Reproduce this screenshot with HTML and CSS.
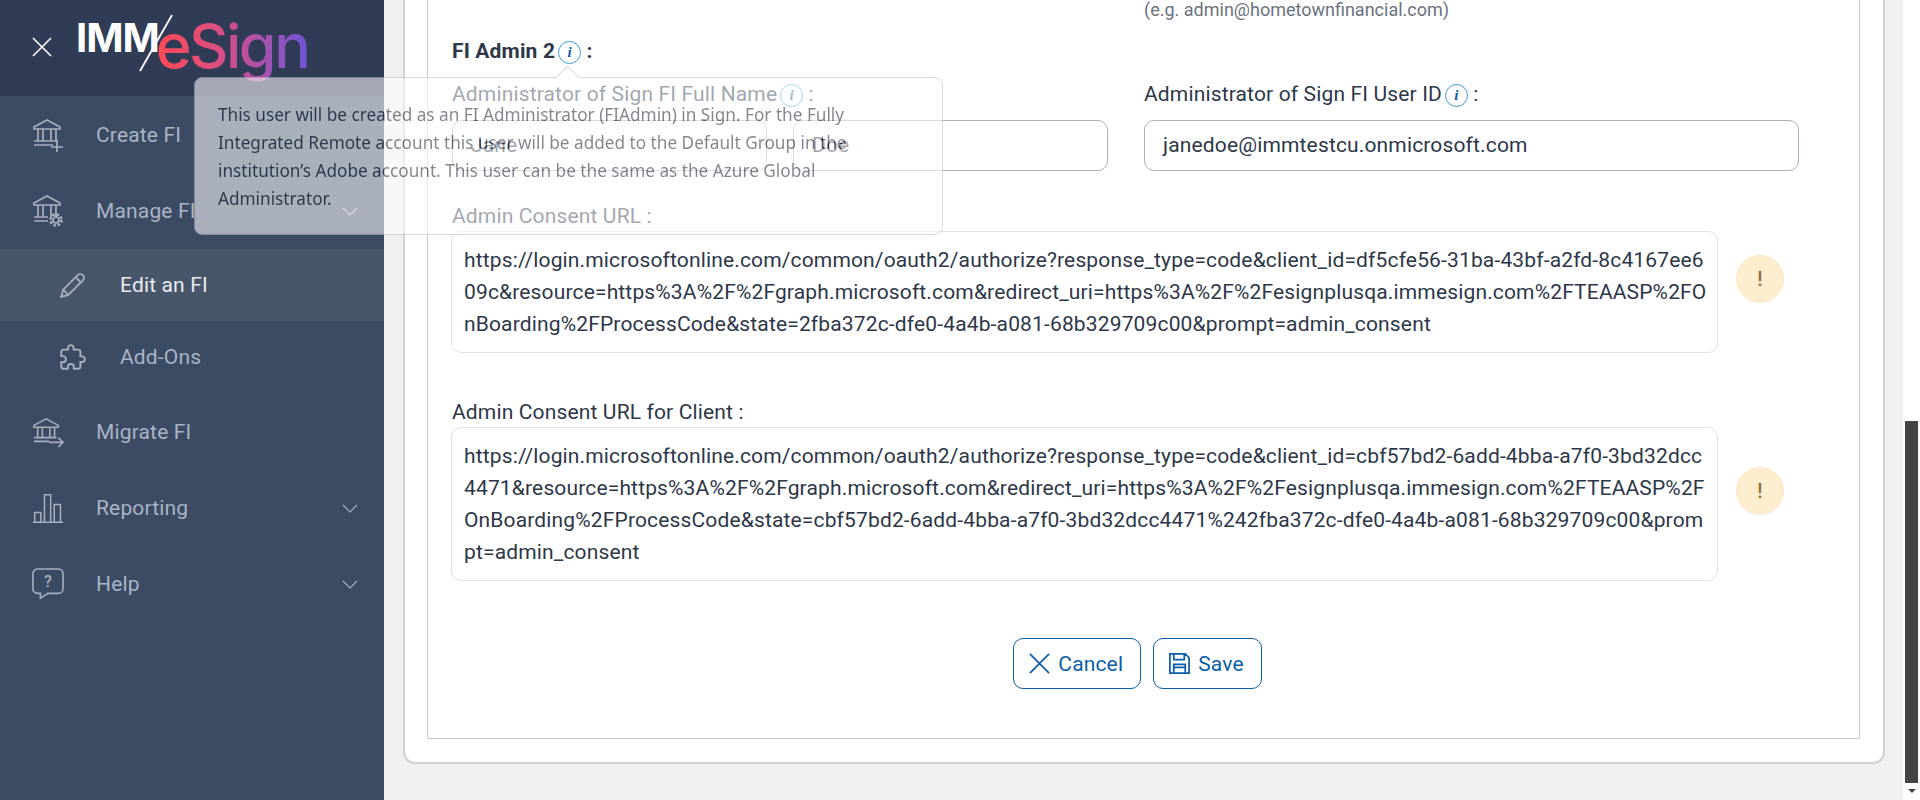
FILE: index.html
```html
<!DOCTYPE html>
<html lang="en">

<head>
  <meta charset="UTF-8" />
  <title>IMM eSign - Edit an FI</title>
  <link rel="stylesheet" href="styles.css">
</head>

<body>

  <aside class="sidebar">
    <div class="brand">
      <svg class="close-icon" viewBox="0 0 20 20"><path d="M1 1 19 19M19 1 1 19" /></svg>
      <div class="logo">
        <span class="logo-imm">IMM</span>
        <svg class="logo-slash" viewBox="0 0 34 58"><path d="M33 1 1 57" /></svg>
        <span class="logo-esign">eSign</span>
      </div>
    </div>

    <nav class="menu">
      <a class="menu-item">
        <svg class="menu-icon" viewBox="0 0 32 34">
          <path d="M2 9 15 2l13 7v2H2zM6 11v12M11 11v12M19 11v12M24 11v12M2 23h24M2 27h19" />
          <path d="M25 22v13M19 29h12" />
        </svg>
        Create FI
      </a>
      <a class="menu-item">
        <svg class="menu-icon" viewBox="0 0 32 34">
          <path d="M2 9 15 2l13 7v2H2zM6 11v12M11 11v12M19 11v12M24 11v12M2 23h14M2 27h14" />
          <circle cx="24" cy="26" r="3" />
          <circle cx="24" cy="26" r="5.5" stroke-dasharray="2.5 1.8" stroke-width="2.6" />
        </svg>
        Manage FI
        <svg class="chevron" viewBox="0 0 16 9"><path d="M1 1l7 7 7-7" /></svg>
      </a>
      <a class="menu-item sub active">
        <svg class="menu-icon" viewBox="0 0 26 26">
          <path d="M2 24l2-7L18 3a3 3 0 0 1 5 5L9 22zM4 17l5 5M16 5l5 5" />
        </svg>
        Edit an FI
      </a>
      <a class="menu-item sub">
        <svg class="menu-icon" viewBox="0 0 24 24">
          <path d="M20.5 11H19V7c0-1.1-.9-2-2-2h-4V3.5C13 2.12 11.88 1 10.5 1S8 2.12 8 3.5V5H4c-1.1 0-1.99.9-1.99 2v3.8H3.5c1.49 0 2.7 1.21 2.7 2.7s-1.21 2.7-2.7 2.7H2V20c0 1.1.9 2 2 2h3.8v-1.5c0-1.49 1.21-2.7 2.7-2.7 1.49 0 2.7 1.21 2.7 2.7V22H17c1.1 0 2-.9 2-2v-4h1.5c1.38 0 2.5-1.12 2.5-2.5S21.88 11 20.5 11z" />
        </svg>
        Add-Ons
      </a>
      <a class="menu-item">
        <svg class="menu-icon" viewBox="0 0 34 32">
          <path d="M2 9 15 2l13 7v2H2zM6 11v11M11 11v11M19 11v11M24 11v11M2 22h24M2 26h16" />
          <path d="M18 27h15M28 22l5 5-5 5" />
        </svg>
        Migrate FI
      </a>
      <a class="menu-item">
        <svg class="menu-icon" viewBox="0 0 36 34">
          <path d="M1 33h34M3 33V22h7v11M14 33V2h7v31M25 33V13h7v20" />
        </svg>
        Reporting
        <svg class="chevron" viewBox="0 0 16 9"><path d="M1 1l7 7 7-7" /></svg>
      </a>
      <a class="menu-item">
        <svg class="menu-icon" viewBox="0 0 34 34">
          <path d="M6 1h22a5 5 0 0 1 5 5v16a5 5 0 0 1-5 5H17l-8 5v-5H6a5 5 0 0 1-5-5V6a5 5 0 0 1 5-5z" />
          <text class="help-mark" x="17" y="20" text-anchor="middle">?</text>
        </svg>
        Help
        <svg class="chevron" viewBox="0 0 16 9"><path d="M1 1l7 7 7-7" /></svg>
      </a>
    </nav>
  </aside>

  <main class="content">
    <section class="card">
      <form class="panel">
        <div class="columns hint-row">
          <div></div>
          <div class="hint">(e.g. admin@hometownfinancial.com)</div>
        </div>

        <h3 class="section-title">FI Admin 2<span class="info">i</span> :</h3>

        <div class="columns">
          <div class="field">
            <label>Administrator of Sign FI Full Name<span class="info">i</span> :</label>
            <div class="name-inputs">
              <div class="input">Jane</div>
              <div class="input">Doe</div>
            </div>
          </div>
          <div class="field">
            <label>Administrator of Sign FI User ID<span class="info">i</span> :</label>
            <div class="input">janedoe@immtestcu.onmicrosoft.com</div>
          </div>
        </div>

        <div class="field url-field first">
          <label>Admin Consent URL :</label>
          <div class="url-row">
            <div class="url-box">https://login.microsoftonline.com/common/oauth2/authorize?response_type=code&amp;client_id=df5cfe56-31ba-43bf-a2fd-8c4167ee609c&amp;resource=https%3A%2F%2Fgraph.microsoft.com&amp;redirect_uri=https%3A%2F%2Fesignplusqa.immesign.com%2FTEAASP%2FOnBoarding%2FProcessCode&amp;state=2fba372c-dfe0-4a4b-a081-68b329709c00&amp;prompt=admin_consent</div>
            <span class="warn">!</span>
          </div>
        </div>

        <div class="field url-field">
          <label>Admin Consent URL for Client :</label>
          <div class="url-row">
            <div class="url-box">https://login.microsoftonline.com/common/oauth2/authorize?response_type=code&amp;client_id=cbf57bd2-6add-4bba-a7f0-3bd32dcc4471&amp;resource=https%3A%2F%2Fgraph.microsoft.com&amp;redirect_uri=https%3A%2F%2Fesignplusqa.immesign.com%2FTEAASP%2FOnBoarding%2FProcessCode&amp;state=cbf57bd2-6add-4bba-a7f0-3bd32dcc4471%242fba372c-dfe0-4a4b-a081-68b329709c00&amp;prompt=admin_consent</div>
            <span class="warn">!</span>
          </div>
        </div>

        <div class="actions">
          <button type="button" class="btn">
            <svg class="btn-icon" viewBox="0 0 24 24"><path d="M2 2l20 20M22 2 2 22" /></svg>
            Cancel
          </button>
          <button type="button" class="btn">
            <svg class="btn-icon" viewBox="0 0 24 24"><path d="M2 2h16l4 4v16H2zM6 2v6h11V2M6 22v-9h12v9M6 16h12" /></svg>
            Save
          </button>
        </div>
      </form>
    </section>
  </main>

  <div class="scrollbar">
    <div class="scroll-thumb"></div>
    <div class="scroll-arrow"></div>
  </div>

  <!-- Tooltip sitting over the page while it fades -->
  <div class="popover">
    <span class="popover-arrow"></span>
    <p>This user will be created as an FI Administrator (FIAdmin) in Sign. For the Fully Integrated Remote account this user will be added to the Default Group in the institution’s Adobe account. This user can be the same as the Azure Global Administrator.</p>
  </div>

</body>

</html>
```

FILE: styles.css
```css
/* Basic reset */
* {
  box-sizing: border-box;
}

body {
  margin: 0;
  height: 800px;
  overflow: hidden;
  display: flex;
  background: #f0f0f0;
  color: #2d3748;
  font-family: Roboto, 'Liberation Sans', sans-serif;
  font-size: 21px;
  letter-spacing: 0.15px;
}

/* Sidebar */
.sidebar {
  width: 384px;
  flex-shrink: 0;
  background: #3c4b64;
}

.brand {
  height: 96px;
  background: #303c56;
  display: flex;
  align-items: flex-start;
  padding-left: 32px;
}

.close-icon {
  width: 20px;
  height: 20px;
  margin-top: 37px;
  fill: none;
  stroke: #fff;
  stroke-width: 1.6;
}

.logo {
  display: flex;
  align-items: flex-start;
  margin-left: 24px;
  margin-top: 14px;
}

.logo-imm {
  color: #fff;
  font-family: Inter, sans-serif;
  font-weight: 700;
  font-size: 40px;
  line-height: 48px;
  letter-spacing: -1px;
}

.logo-slash {
  width: 34px;
  height: 58px;
  margin-left: -20px;
  fill: none;
  stroke: #fff;
  stroke-width: 1.8;
}

.logo-esign {
  margin-left: -17px;
  margin-top: -6px;
  font-family: Inter, sans-serif;
  font-weight: 500;
  font-size: 61px;
  line-height: 76px;
  letter-spacing: -2.5px;
  background: linear-gradient(90deg, #ff4a55 0%, #d84f88 45%, #6f55d8 100%);
  -webkit-background-clip: text;
  background-clip: text;
  color: transparent;
}

.menu {
  padding-top: 1px;
}

.menu-item {
  height: 76px;
  display: flex;
  align-items: center;
  gap: 32px;
  padding: 0 26px 0 32px;
  color: #a9b4c4;
  line-height: 24px;
}

.menu-item.sub + .menu-item:not(.sub) {
  margin-top: 1px;
}

.menu-icon {
  width: 32px;
  height: 34px;
  flex-shrink: 0;
  fill: none;
  stroke: #a8b0be;
  stroke-width: 1.7;
}

.help-mark {
  fill: #a8b0be;
  stroke: none;
  font-size: 17px;
  font-weight: 500;
}

.chevron {
  width: 16px;
  height: 9px;
  margin-left: auto;
  fill: none;
  stroke: #a8b0be;
  stroke-width: 1.2;
}

.menu-item.sub {
  height: 72px;
  padding-left: 59px;
  gap: 34px;
}

.menu-item.sub .menu-icon {
  width: 27px;
  height: 27px;
}

.menu-item.active {
  background: #475669;
  color: #e8ebef;
}

/* Main area */
.content {
  flex: 1;
  padding: 0 18px 36px 19px;
  display: flex;
}

.card {
  flex: 1;
  background: #fff;
  border: 2px solid #d2d2d2;
  border-top: none;
  border-radius: 0 0 12px 12px;
  padding: 0 23px 23px 22px;
  display: flex;
}

.panel {
  flex: 1;
  border: 1px solid #cdcdcd;
  border-top: none;
  padding: 0 0 0 24px;
}

.columns {
  display: grid;
  grid-template-columns: 656px 655px;
  column-gap: 36px;
}

.hint-row {
  height: 39px;
}

.hint {
  color: #6b7280;
  font-size: 18px;
  line-height: 19px;
  letter-spacing: 0;
}

.section-title {
  margin: 0;
  height: 42px;
  font-size: 21px;
  font-weight: 700;
  line-height: 24px;
}

.field label {
  display: block;
  height: 39px;
  line-height: 26px;
}

.info {
  display: inline-block;
  width: 23px;
  height: 23px;
  margin-left: 3px;
  border: 1px solid #3f9ad6;
  border-radius: 50%;
  color: #0a5ea8;
  font-family: 'Liberation Serif', serif;
  font-size: 15px;
  font-style: italic;
  font-weight: 700;
  line-height: 21px;
  text-align: center;
  vertical-align: 1px;
}

.input {
  height: 51px;
  padding: 0 18px;
  border: 1px solid #a9b1c0;
  border-radius: 10px;
  line-height: 49px;
}

.name-inputs {
  display: grid;
  grid-template-columns: 315px 315px;
  column-gap: 26px;
}

.url-field.first {
  margin-top: 32px;
}

.url-field {
  margin-top: 46px;
}

.field.url-field label {
  height: 28px;
}

.url-row {
  display: flex;
  align-items: center;
  margin-left: -1px;
}

.url-box {
  width: 1267px;
  padding: 12px 6px 12px 12px;
  border: 1px solid #dfe1e5;
  border-radius: 10px;
  line-height: 32px;
  word-break: break-all;
}

.warn {
  width: 48px;
  height: 48px;
  margin-left: 18px;
  margin-bottom: 26px;
  border: 1px solid #fde8c3;
  border-radius: 50%;
  background: #fdeecf;
  color: #8a6d3b;
  font-size: 20px;
  font-weight: 500;
  line-height: 46px;
  text-align: center;
}

.actions {
  display: flex;
  justify-content: center;
  gap: 12px;
  margin-top: 57px;
  padding-right: 36px;
}

.btn {
  height: 51px;
  display: flex;
  align-items: center;
  gap: 7px;
  padding: 0 17px 0 14px;
  border: 1px solid #0b5ea8;
  border-radius: 10px;
  background: #fff;
  color: #0b5ea8;
  font-family: inherit;
  font-size: 21px;
  letter-spacing: inherit;
}

.btn-icon {
  width: 23px;
  height: 23px;
  fill: none;
  stroke: #0b5ea8;
  stroke-width: 1.8;
}

/* Browser scrollbar */
.scrollbar {
  width: 17px;
  flex-shrink: 0;
  height: 800px;
  background: #fff;
  padding: 421px 2px 0;
}

.scroll-thumb {
  height: 362px;
  background: #444;
}

.scroll-arrow {
  width: 0;
  margin: 6px auto 0;
  border-left: 4px solid transparent;
  border-right: 4px solid transparent;
  border-top: 4px solid #444;
}

/* Popover */
.popover {
  position: absolute;
  left: 194px;
  top: 77px;
  width: 749px;
  height: 158px;
  padding: 23px;
  background: #fff;
  border: 1px solid #b9bec8;
  border-radius: 8px;
  opacity: 0.56;
  color: #1f2937;
  font-family: 'Noto Sans', sans-serif;
  font-size: 17.2px;
  letter-spacing: 0;
  line-height: 28px;
}

.popover p {
  margin: 0;
}

.popover-arrow {
  position: absolute;
  left: 364px;
  top: -9px;
  width: 17px;
  height: 17px;
  background: #fff;
  border-left: 1px solid #b9bec8;
  border-top: 1px solid #b9bec8;
  transform: rotate(45deg);
}
```
